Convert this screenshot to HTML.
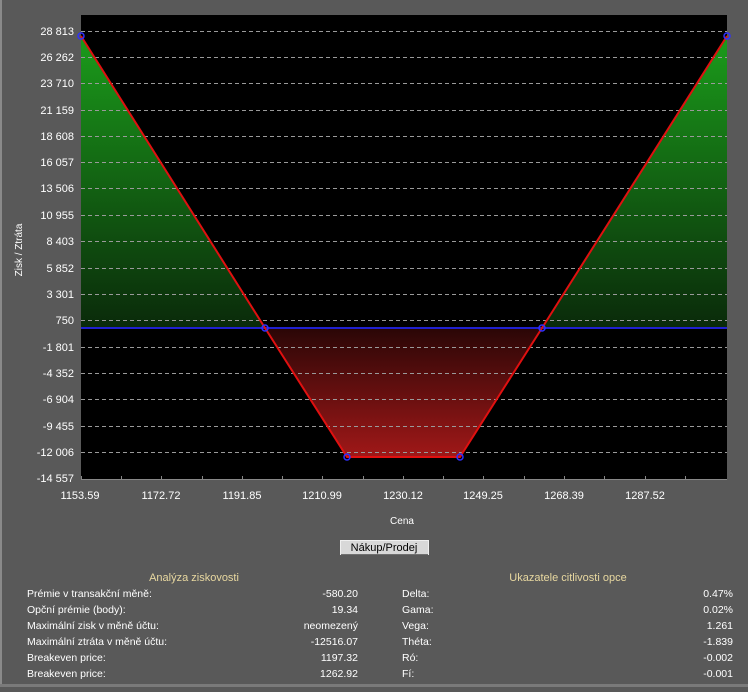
<!DOCTYPE html><html><head><style>
body{margin:0;width:748px;height:687px;background:#595959;overflow:hidden;font-family:"Liberation Sans",sans-serif}
</style></head><body>
<svg width="748" height="687" xmlns="http://www.w3.org/2000/svg" font-family="Liberation Sans, sans-serif" font-size="11">
<defs>
<linearGradient id="g" x1="0" y1="36" x2="0" y2="328" gradientUnits="userSpaceOnUse"><stop offset="0" stop-color="#1b9c1b"/><stop offset="1" stop-color="#0a2a0a"/></linearGradient>
<linearGradient id="r" x1="0" y1="328" x2="0" y2="457" gradientUnits="userSpaceOnUse"><stop offset="0" stop-color="#2a0606"/><stop offset="1" stop-color="#a01818"/></linearGradient>
</defs>
<rect x="0" y="0" width="2" height="687" fill="#8a8a8a"/>
<rect x="0" y="684" width="748" height="3" fill="#7a7a7a"/>
<rect x="81" y="15" width="646" height="464" fill="#000"/>
<polygon points="81,36 265,328 81,328" fill="url(#g)"/>
<polygon points="727,36 542,328 727,328" fill="url(#g)"/>
<polygon points="265,328 347,457 460,457 542,328" fill="url(#r)"/>
<g stroke="#9a9a9a" stroke-dasharray="4,3" stroke-width="1">
<line x1="81" x2="727" y1="31.5" y2="31.5"/><line x1="81" x2="727" y1="57.5" y2="57.5"/><line x1="81" x2="727" y1="83.5" y2="83.5"/><line x1="81" x2="727" y1="110.5" y2="110.5"/><line x1="81" x2="727" y1="136.5" y2="136.5"/><line x1="81" x2="727" y1="162.5" y2="162.5"/><line x1="81" x2="727" y1="188.5" y2="188.5"/><line x1="81" x2="727" y1="215.5" y2="215.5"/><line x1="81" x2="727" y1="241.5" y2="241.5"/><line x1="81" x2="727" y1="268.5" y2="268.5"/><line x1="81" x2="727" y1="294.5" y2="294.5"/><line x1="81" x2="727" y1="320.5" y2="320.5"/><line x1="81" x2="727" y1="347.5" y2="347.5"/><line x1="81" x2="727" y1="373.5" y2="373.5"/><line x1="81" x2="727" y1="399.5" y2="399.5"/><line x1="81" x2="727" y1="426.5" y2="426.5"/><line x1="81" x2="727" y1="452.5" y2="452.5"/>
</g>
<line x1="81" x2="727" y1="328" y2="328" stroke="#2020d0" stroke-width="2"/>
<polyline points="81,36 265,328 347,457 460,457 542,328 727,36" fill="none" stroke="#e01010" stroke-width="2"/>
<g fill="none" stroke="#3030ff" stroke-width="1.5">
<circle cx="81" cy="36" r="3"/><circle cx="265" cy="328" r="3"/><circle cx="347" cy="457" r="3"/><circle cx="460" cy="457" r="3"/><circle cx="542" cy="328" r="3"/><circle cx="727" cy="36" r="3"/>
</g>
<line x1="81" x2="727" y1="479.5" y2="479.5" stroke="#888"/>
<g stroke="#888"><line x1="81.5" x2="81.5" y1="476" y2="480"/><line x1="121.5" x2="121.5" y1="476" y2="480"/><line x1="161.5" x2="161.5" y1="476" y2="480"/><line x1="202.5" x2="202.5" y1="476" y2="480"/><line x1="242.5" x2="242.5" y1="476" y2="480"/><line x1="282.5" x2="282.5" y1="476" y2="480"/><line x1="322.5" x2="322.5" y1="476" y2="480"/><line x1="363.5" x2="363.5" y1="476" y2="480"/><line x1="403.5" x2="403.5" y1="476" y2="480"/><line x1="443.5" x2="443.5" y1="476" y2="480"/><line x1="483.5" x2="483.5" y1="476" y2="480"/><line x1="524.5" x2="524.5" y1="476" y2="480"/><line x1="564.5" x2="564.5" y1="476" y2="480"/><line x1="604.5" x2="604.5" y1="476" y2="480"/><line x1="645.5" x2="645.5" y1="476" y2="480"/><line x1="685.5" x2="685.5" y1="476" y2="480"/></g>
<g fill="#fff" text-anchor="end">
<text x="74" y="35">28 813</text><text x="74" y="61">26 262</text><text x="74" y="87">23 710</text><text x="74" y="114">21 159</text><text x="74" y="140">18 608</text><text x="74" y="166">16 057</text><text x="74" y="192">13 506</text><text x="74" y="219">10 955</text><text x="74" y="245">8 403</text><text x="74" y="272">5 852</text><text x="74" y="298">3 301</text><text x="74" y="324">750</text><text x="74" y="351">-1 801</text><text x="74" y="377">-4 352</text><text x="74" y="403">-6 904</text><text x="74" y="430">-9 455</text><text x="74" y="456">-12 006</text><text x="74" y="482">-14 557</text>
</g>
<text transform="translate(22,250) rotate(-90)" fill="#fff" font-size="10" text-anchor="middle">Zisk / Ztráta</text>
<g fill="#fff" text-anchor="middle">
<text x="80" y="499">1153.59</text><text x="161" y="499">1172.72</text><text x="242" y="499">1191.85</text><text x="322" y="499">1210.99</text><text x="403" y="499">1230.12</text><text x="483" y="499">1249.25</text><text x="564" y="499">1268.39</text><text x="645" y="499">1287.52</text>
<text x="402" y="524" font-size="10">Cena</text>
</g>
<rect x="340.5" y="540.5" width="88" height="14" fill="#d8d8d8" stroke="#f0f0f0"/>
<line x1="341" x2="428" y1="554.5" y2="554.5" stroke="#707070"/>
<text x="384" y="551" fill="#000" text-anchor="middle" font-size="11">Nákup/Prodej</text>
<g fill="#e8d8a0" text-anchor="middle"><text x="194" y="581">Analýza ziskovosti</text><text x="568" y="581">Ukazatele citlivosti opce</text></g>
<g fill="#fff" font-size="10.5">
<text x="27" y="597">Prémie v transakční měně:</text><text x="27" y="613">Opční prémie (body):</text><text x="27" y="629">Maximální zisk v měně účtu:</text><text x="27" y="645">Maximální ztráta v měně účtu:</text><text x="27" y="661">Breakeven price:</text><text x="27" y="677">Breakeven price:</text>
<text x="402" y="597">Delta:</text><text x="402" y="613">Gama:</text><text x="402" y="629">Vega:</text><text x="402" y="645">Théta:</text><text x="402" y="661">Ró:</text><text x="402" y="677">Fí:</text>
</g>
<g fill="#fff" font-size="10.5" text-anchor="end">
<text x="358" y="597">-580.20</text><text x="358" y="613">19.34</text><text x="358" y="629">neomezený</text><text x="358" y="645">-12516.07</text><text x="358" y="661">1197.32</text><text x="358" y="677">1262.92</text>
<text x="733" y="597">0.47%</text><text x="733" y="613">0.02%</text><text x="733" y="629">1.261</text><text x="733" y="645">-1.839</text><text x="733" y="661">-0.002</text><text x="733" y="677">-0.001</text>
</g>
</svg>
</body></html>
